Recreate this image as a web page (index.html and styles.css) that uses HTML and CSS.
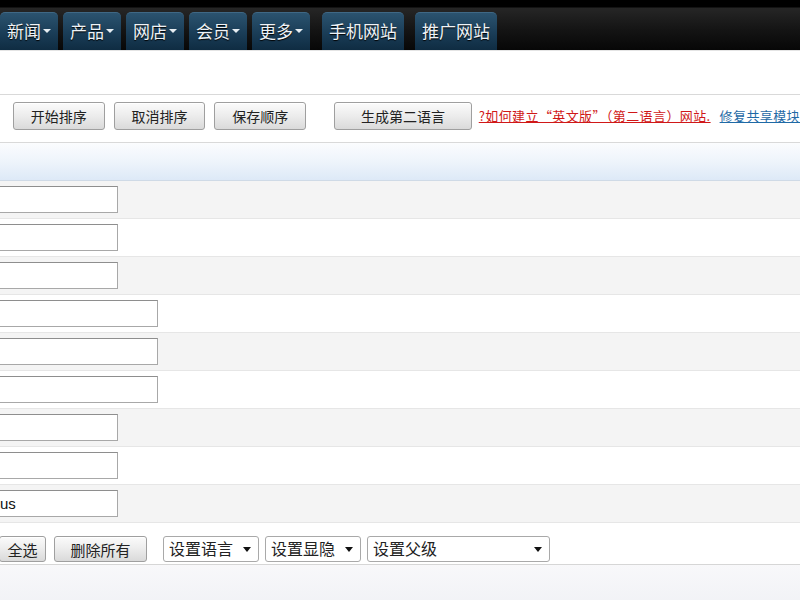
FILE: index.html
```html
<!DOCTYPE html>
<html lang="zh-CN">
<head>
  <meta charset="UTF-8" />
  <title>栏目管理</title>
  <link rel="stylesheet" href="styles.css">
</head>
<body>
  <div class="topbar">
    <ul class="nav">
      <li class="tab"><a href="#">新闻<i class="caret"></i></a></li>
      <li class="tab"><a href="#">产品<i class="caret"></i></a></li>
      <li class="tab"><a href="#">网店<i class="caret"></i></a></li>
      <li class="tab"><a href="#">会员<i class="caret"></i></a></li>
      <li class="tab"><a href="#">更多<i class="caret"></i></a></li>
      <li class="tab tab-far"><a href="#">手机网站</a></li>
      <li class="tab tab-far"><a href="#">推广网站</a></li>
    </ul>
  </div>

  <div class="main">
    <div class="toolbar">
      <button class="btn">开始排序</button>
      <button class="btn">取消排序</button>
      <button class="btn">保存顺序</button>
      <button class="btn btn-wide">生成第二语言</button>
      <a class="link-red" href="#">?如何建立“英文版”（第二语言）网站.</a>
      <a class="link-blue" href="#">修复共享模块</a>
    </div>

    <div class="list-head"></div>

    <div class="row"><input class="name" type="text" value=""></div>
    <div class="row"><input class="name" type="text" value=""></div>
    <div class="row"><input class="name" type="text" value=""></div>
    <div class="row"><input class="name name-long" type="text" value=""></div>
    <div class="row"><input class="name name-long" type="text" value=""></div>
    <div class="row"><input class="name name-long" type="text" value=""></div>
    <div class="row"><input class="name" type="text" value=""></div>
    <div class="row"><input class="name" type="text" value=""></div>
    <div class="row"><input class="name" type="text" value="us"></div>

    <div class="actions">
      <button class="btn btn-small btn-first">全选</button>
      <button class="btn btn-small btn-del">删除所有</button>
      <span class="pick pick-lang"><select><option>设置语言</option></select></span>
      <span class="pick pick-show"><select><option>设置显隐</option></select></span>
      <span class="pick pick-parent"><select><option>设置父级</option></select></span>
    </div>

    <div class="footer-band"></div>
  </div>
</body>
</html>
```

FILE: styles.css
```css
body {
  margin: 0;
  font-family: "Liberation Sans", "Noto Sans CJK SC", sans-serif;
  background: white;
  overflow: hidden;
}

/* 顶部导航 */
.topbar {
  height: 50px;
  background: linear-gradient(#000 0, #000 7px, #262626 8px, #141414 30px, #070707 100%);
  border-bottom: 1px solid #e4e4e4;
}

.nav {
  list-style: none;
  margin: 0;
  padding: 12px 0 0 0;
  display: flex;
  height: 38px;
}

.tab {
  margin-right: 5px;
}

.tab-far {
  margin-left: 7px;
  margin-right: 4px;
}

.tab a {
  display: flex;
  align-items: center;
  height: 38px;
  padding: 0 7px 3px 7px;
  box-sizing: border-box;
  border-radius: 5px 5px 0 0;
  border-top: 1px solid #3f6885;
  background: linear-gradient(#2b536f, #1a3d57 55%, #0f2c42);
  color: #eef3f7;
  font-size: 17px;
  text-decoration: none;
  text-shadow: 0 1px 1px #000;
}

.caret {
  width: 0;
  height: 0;
  margin-left: 2px;
  margin-top: 2px;
  border-left: 4px solid transparent;
  border-right: 4px solid transparent;
  border-top: 4px solid #e6edf2;
}

/* 工具栏 */
.main {
  margin-top: 43px;
}

.toolbar {
  display: flex;
  align-items: flex-start;
  padding: 7px 0 0 13px;
  box-sizing: border-box;
  height: 49px;
  border-top: 1px solid #d9d9d9;
  border-bottom: 1px solid #d9d9d9;
  white-space: nowrap;
}

.btn {
  height: 28px;
  width: 92px;
  margin-right: 9px;
  padding: 0;
  font-family: "Liberation Sans", "Noto Sans CJK SC", sans-serif;
  font-size: 14px;
  color: #222;
  background: linear-gradient(#fbfbfb, #ececec 50%, #dadada);
  border: 1px solid #9f9f9f;
  border-radius: 3px;
  box-shadow: inset 0 1px 0 #fff;
}

.btn-wide {
  width: 138px;
  margin-left: 19px;
  margin-right: 7px;
}

.link-red,
.link-blue {
  font-family: "Noto Sans CJK SC", sans-serif;
  font-size: 13px;
  line-height: 28px;
}

.link-red {
  color: #d01818;
  letter-spacing: 0.4px;
  margin-right: 9px;
}

.link-blue {
  color: #1f6aa6;
  letter-spacing: 0.4px;
}

/* 列表 */
.list-head {
  height: 37px;
  background: linear-gradient(#fbfcfe, #eef4fb 50%, #dde9f7);
  border-bottom: 1px solid #cfdae6;
}

.row {
  display: flex;
  align-items: center;
  height: 37px;
  border-bottom: 1px solid #e6e6e6;
}

.row:nth-of-type(odd) {
  background: #f4f4f4;
}

.row:nth-of-type(even) {
  background: #fff;
}

.name {
  width: 123px;
  height: 27px;
  margin-left: -5px;
  padding: 0 0 0 4px;
  box-sizing: border-box;
  font-family: "Liberation Sans", "Noto Sans CJK SC", sans-serif;
  font-size: 15px;
  color: #111;
  background: #fff;
  border: 1px solid #a8a8a8;
  border-top-color: #8e8e8e;
}

.name-long {
  width: 163px;
}

/* 底部操作 */
.actions {
  display: flex;
  align-items: center;
  height: 42px;
  padding-top: 11px;
  box-sizing: border-box;
  border-bottom: 1px solid #d6d6d6;
}

.btn-small {
  height: 26px;
  font-size: 15px;
}

.btn-first {
  width: 47px;
  margin-left: -1px;
  margin-right: 8px;
}

.btn-del {
  width: 93px;
  margin-right: 16px;
}

.pick {
  position: relative;
  display: inline-block;
  margin-right: 6px;
}

.pick select {
  appearance: none;
  -webkit-appearance: none;
  height: 26px;
  width: 96px;
  padding: 0 0 0 5px;
  font-family: "Liberation Sans", "Noto Sans CJK SC", sans-serif;
  font-size: 16px;
  color: #222;
  background: #fff;
  border: 1px solid #a9a9a9;
  border-radius: 3px;
}

.pick-parent select {
  width: 183px;
}

.pick::after {
  content: "";
  position: absolute;
  right: 8px;
  top: 11px;
  border-left: 4px solid transparent;
  border-right: 4px solid transparent;
  border-top: 5px solid #111;
  pointer-events: none;
}

.footer-band {
  height: 40px;
  background: linear-gradient(#f8f8fa, #f1f2f6);
}
```
